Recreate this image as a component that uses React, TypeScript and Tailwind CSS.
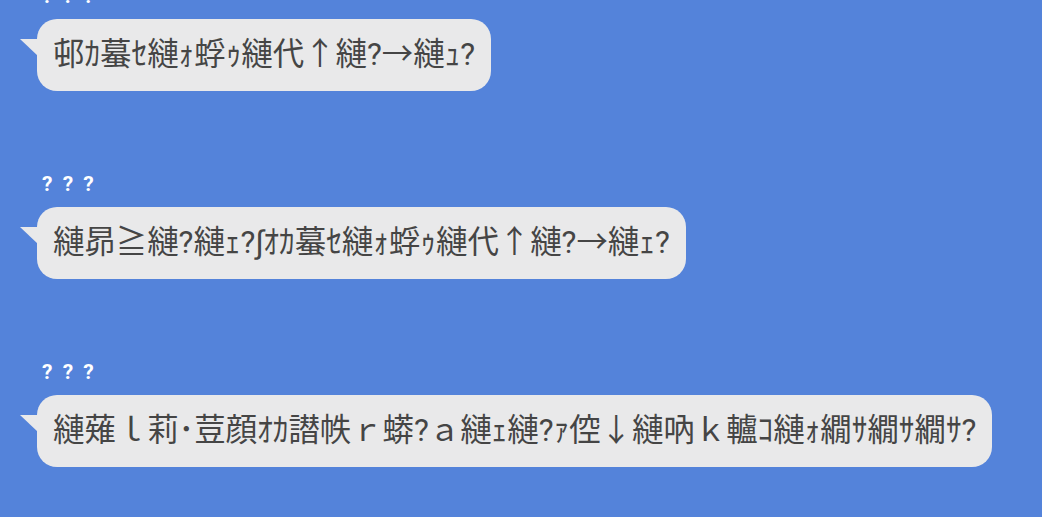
const messages = [
  { name: "? ? ?", text: "邨ｶ蟇ｾ縺ｫ蜉ｩ縺代↑縺?→縺ｭ?" },
  { name: "? ? ?", text: "縺昴≧縺?縺ｪ?∫ｵｶ蟇ｾ縺ｫ蜉ｩ縺代↑縺?→縺ｪ?" },
  { name: "? ? ?", text: "縺薙ｌ莉･荳顔ｵｶ譛帙ｒ蟒?ａ縺ｪ縺?ｧ倥↓縺吶ｋ轤ｺ縺ｫ繝ｻ繝ｻ繝ｻ?" },
];

const Tail = () => (
  <svg
    className="absolute -left-[17px] top-[20px]"
    width="18"
    height="18"
    viewBox="0 0 18 18"
  >
    <path d="M0 0 H18 V17 Z" fill="#e9e9ea" />
  </svg>
);

export default function App() {
  return (
    <div className="w-[1042px] h-[517px] overflow-hidden bg-[#5483da] font-['Roboto','Noto_Sans_CJK_JP',sans-serif]">
      <div className="flex flex-col gap-[81px] -mt-4 pl-[37px]">
        {messages.map((m, i) => (
          <div key={i} className="flex flex-col items-start">
            <div className="h-6 pl-[5px] text-[21px] leading-6 font-bold text-white tracking-[2.5px]">
              {m.name}
            </div>
            <div className="relative mt-[11px] rounded-[20px] bg-[#e9e9ea] px-4 py-4 text-[31.4px] leading-10 text-[#454545] whitespace-nowrap">
              <Tail />
              {m.text}
            </div>
          </div>
        ))}
      </div>
    </div>
  );
}
